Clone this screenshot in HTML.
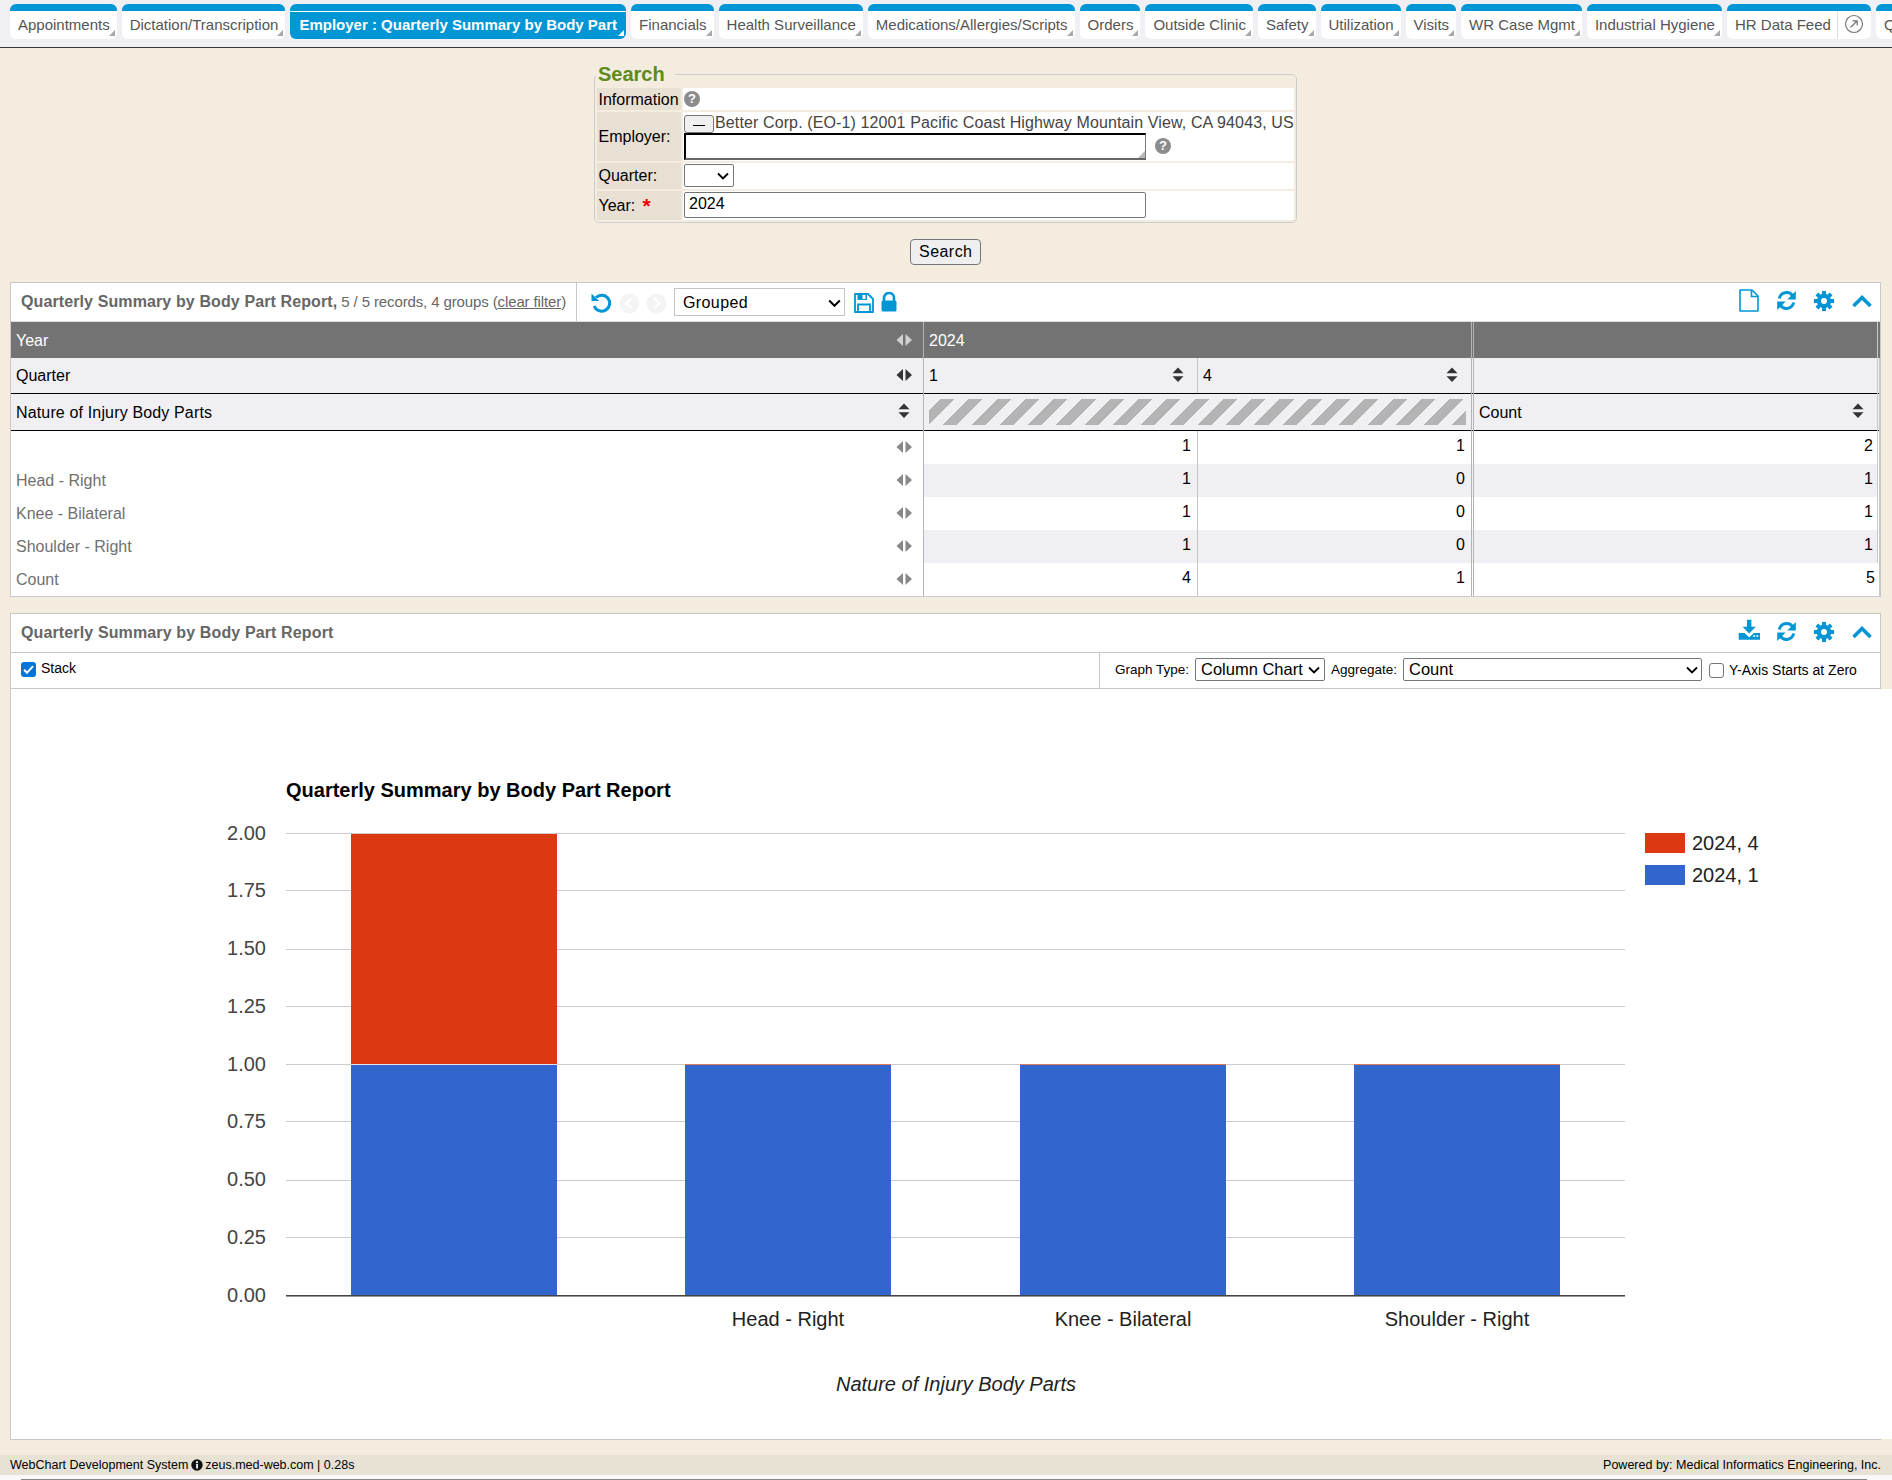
<!DOCTYPE html>
<html><head><meta charset="utf-8">
<style>
*{box-sizing:border-box;}
html,body{margin:0;padding:0;}
body{width:1892px;height:1480px;overflow:hidden;position:relative;background:#f4eddf;font-family:"Liberation Sans",sans-serif;color:#000;}
.a{position:absolute;white-space:nowrap;}
/* tab bar */
#tabbar{position:absolute;left:0;top:0;width:1892px;height:48px;background:#efeff4;border-bottom:1px solid #363636;}
.tab{position:absolute;white-space:nowrap;top:4px;height:35px;background:#fff;border-top:7px solid #0096d6;border-radius:6px;font-size:15px;color:#555;line-height:28px;padding:0 7px 0 8px;}
.tab .cn{position:absolute;right:2px;bottom:3px;width:0;height:0;border-style:solid;border-width:0 0 6px 6px;border-color:transparent transparent #a8a8a8 transparent;}
.tab.act{background:#0096d6;color:#fff;font-weight:bold;padding:0 9px;}
.tab.act:before{content:"";position:absolute;left:0;right:0;top:0;height:1px;background:#fff;}
.tab.act .cn{border-color:transparent transparent #fff transparent;}

/* search */
#fs{position:absolute;left:594px;top:74px;width:703px;height:149px;border:1px solid #cccccc;border-radius:5px;}
#legend{position:absolute;left:596px;top:62px;height:24px;padding:0 10px 0 2px;background:#f4eddf;font-size:20px;font-weight:bold;color:#5e8a1e;line-height:24px;}
.lc{position:absolute;left:597px;width:84px;background:#e8e1d3;}
.vc{position:absolute;left:683px;width:611px;background:#fff;}
.lbl{position:absolute;left:598.5px;font-size:16px;color:#000;line-height:18px;}
.help{position:absolute;width:16px;height:16px;border-radius:50%;background:#8c8c8c;color:#fff;font-weight:bold;font-size:13px;line-height:16px;text-align:center;}
.btn{position:absolute;background:#efefef;border:1px solid #767676;border-radius:3px;}

/* report panel */
.panel{position:absolute;left:10px;width:1871px;background:#fff;border:1px solid #c8c8c8;}
.ptitle{position:absolute;font-size:16px;font-weight:bold;color:#666;line-height:18px;}
.cell{position:absolute;font-size:16px;line-height:18px;}

/* chart panel */
.ico{position:absolute;}
</style></head><body>
<div id="tabbar">
<div class="tab" style="left:10px;width:106.7px">Appointments<i class="cn"></i></div>
<div class="tab" style="left:121.7px;width:163.7px">Dictation/Transcription<i class="cn"></i></div>
<div class="tab act" style="left:290.4px;width:335.7px">Employer : Quarterly Summary by Body Part<i class="cn"></i></div>
<div class="tab" style="left:631.1px;width:82.5px">Financials<i class="cn"></i></div>
<div class="tab" style="left:718.6px;width:144.2px">Health Surveillance<i class="cn"></i></div>
<div class="tab" style="left:867.8px;width:206.8px">Medications/Allergies/Scripts<i class="cn"></i></div>
<div class="tab" style="left:1079.6px;width:60.9px">Orders<i class="cn"></i></div>
<div class="tab" style="left:1145.4px;width:107.5px">Outside Clinic<i class="cn"></i></div>
<div class="tab" style="left:1258px;width:57.5px">Safety<i class="cn"></i></div>
<div class="tab" style="left:1320.5px;width:80px">Utilization<i class="cn"></i></div>
<div class="tab" style="left:1405.5px;width:50.6px">Visits<i class="cn"></i></div>
<div class="tab" style="left:1461.1px;width:120.9px">WR Case Mgmt<i class="cn"></i></div>
<div class="tab" style="left:1586.9px;width:135.1px">Industrial Hygiene<i class="cn"></i></div>
<div class="tab" style="left:1727px;width:144px">HR Data Feed
  <span style="position:absolute;left:110px;top:0;width:1px;height:28px;background:#ddd"></span>
  <svg style="position:absolute;left:117px;top:3px" width="20" height="20" viewBox="0 0 20 20"><circle cx="10" cy="10" r="8.5" fill="none" stroke="#777" stroke-width="1.2"/><path d="M6.5 13.5 L13 7 M8.5 6.8 H13.2 V11.5" fill="none" stroke="#777" stroke-width="1.2"/></svg>
</div>
<div class="tab" style="left:1876px;width:120px">Quality</div>
</div>

<div id="fs"></div>
<div id="legend">Search</div>
<div class="lc" style="top:88px;height:22px"></div><div class="vc" style="top:88px;height:22px"></div>
<div class="lc" style="top:112px;height:49px"></div><div class="vc" style="top:112px;height:49px"></div>
<div class="lc" style="top:163px;height:26px"></div><div class="vc" style="top:163px;height:26px"></div>
<div class="lc" style="top:191px;height:29px"></div><div class="vc" style="top:191px;height:29px"></div>
<div class="lbl a" style="top:91px">Information</div>
<div class="help" style="left:684px;top:91px">?</div>
<div class="lbl a" style="top:128px">Employer:</div>
<div class="btn" style="left:684px;top:115px;width:30px;height:18px"><span style="position:absolute;left:8px;top:9px;width:12px;height:1px;background:#000"></span></div>
<div class="a" style="left:715px;top:114px;font-size:16px;color:#444;line-height:18px;letter-spacing:0.12px">Better Corp. (EO-1) 12001 Pacific Coast Highway Mountain View, CA 94043, US</div>
<div class="a" style="left:684px;top:133px;width:462px;height:27px;background:#fff;border-style:solid;border-width:2px 1px 2px 2px;border-color:#000 #777 #666 #000;"><svg style="position:absolute;right:0;bottom:0" width="7" height="7" viewBox="0 0 7 7"><path d="M7 0 V7 H0 Z" fill="#b8b8b8"/></svg></div>
<div class="help" style="left:1155px;top:138px">?</div>
<div class="lbl a" style="top:166.5px">Quarter:</div>
<div class="a" style="left:684px;top:164px;width:50px;height:23px;background:#fff;border:1px solid #767676;border-radius:2px"><svg style="position:absolute;left:32px;top:7px" width="12" height="8" viewBox="0 0 12 8"><path d="M1 1.5 L6 6.5 L11 1.5" fill="none" stroke="#000" stroke-width="1.8"/></svg></div>
<div class="lbl a" style="top:197px">Year:</div>
<div class="a" style="left:642.5px;top:196px;font-size:21px;color:#e00;font-weight:bold;line-height:20px">*</div>
<div class="a" style="left:684px;top:192px;width:462px;height:26px;background:#fff;border:1px solid #767676;border-radius:2px;font-size:16px;line-height:22px;padding-left:4px">2024</div>
<div class="btn" style="left:910px;top:239px;width:71px;height:26px;font-size:16px;line-height:24px;text-align:center;border-radius:4px;letter-spacing:0.45px;text-indent:0.5px">Search</div>

<div class="panel" style="top:282px;height:315px"></div>
<div class="ptitle a" style="left:21px;top:293px;letter-spacing:0.11px">Quarterly Summary by Body Part Report,<span style="font-weight:normal;font-size:15px;letter-spacing:-0.12px"> 5 / 5 records, 4 groups (<u>clear filter</u>)</span></div>
<div class="a" style="left:576px;top:283px;width:1px;height:38px;background:#c8c8c8"></div>
<!-- toolbar icons -->
<svg class="a" style="left:590px;top:292px" width="23" height="22" viewBox="0 0 23 22"><path d="M6 5.5 A8 8 0 1 1 4.2 14" fill="none" stroke="#0096d6" stroke-width="3"/><path d="M1.5 1.5 V9 H9 Z" fill="#0096d6"/></svg>
<svg class="a" style="left:619px;top:293px" width="21" height="21" viewBox="0 0 21 21"><circle cx="10.5" cy="10.5" r="10" fill="#f4f4f4"/><path d="M12.5 5.5 L7.5 10.5 L12.5 15.5" fill="none" stroke="#fff" stroke-width="2.2"/></svg>
<svg class="a" style="left:646px;top:293px" width="21" height="21" viewBox="0 0 21 21"><circle cx="10.5" cy="10.5" r="10" fill="#f4f4f4"/><path d="M8.5 5.5 L13.5 10.5 L8.5 15.5" fill="none" stroke="#fff" stroke-width="2.2"/></svg>
<div class="a" style="left:674px;top:288px;width:171px;height:28px;border:1px solid #c4c4c4;background:#fff;font-size:16px;line-height:28px;padding-left:8px;letter-spacing:0.4px">Grouped<svg style="position:absolute;left:153px;top:10px" width="13" height="9" viewBox="0 0 13 9"><path d="M1.2 1.5 L6.5 6.8 L11.8 1.5" fill="none" stroke="#000" stroke-width="2"/></svg></div>
<svg class="a" style="left:853px;top:292px" width="22" height="22" viewBox="0 0 22 22"><path d="M2 2 H15 L20 7 V20 H2 Z" fill="none" stroke="#0096d6" stroke-width="1.8" stroke-linejoin="round"/><path d="M4.5 2 H14 V8 H4.5 Z" fill="#0096d6"/><rect x="9.5" y="3" width="3" height="4" fill="#fff"/><path d="M5 20 V12.5 H17 V20" fill="none" stroke="#0096d6" stroke-width="1.8"/></svg>
<svg class="a" style="left:880px;top:292px" width="18" height="21" viewBox="0 0 18 21"><path d="M4 9 V6 A5 5 0 0 1 14 6 V9" fill="none" stroke="#0096d6" stroke-width="2.6"/><rect x="1.5" y="8.5" width="15" height="11" rx="1.5" fill="#0096d6"/></svg>
<!-- right header icons -->
<svg class="a" style="left:1738px;top:288px" width="22" height="25" viewBox="0 0 22 25"><path d="M2 2 H14 L20 8 V23 H2 Z" fill="none" stroke="#0096d6" stroke-width="1.6" stroke-linejoin="round"/><path d="M13.5 2 V8.5 H20" fill="none" stroke="#0096d6" stroke-width="1.6"/></svg>
<svg class="a ref" style="left:1776px;top:290px" width="21" height="21" viewBox="0 0 21 21"><path d="M3.3 8.5 A7.5 7.5 0 0 1 16.5 5.5" fill="none" stroke="#0096d6" stroke-width="3"/><path d="M19.8 1 V9.5 H11.3 Z" fill="#0096d6"/><path d="M17.7 12.5 A7.5 7.5 0 0 1 4.5 15.5" fill="none" stroke="#0096d6" stroke-width="3"/><path d="M1.2 20 V11.5 H9.7 Z" fill="#0096d6"/></svg>
<svg class="a gear" style="left:1814px;top:291px" width="20" height="20" viewBox="0 0 20 20"><g fill="#0096d6"><rect x="8" y="0" width="4" height="20"/><rect x="0" y="8" width="20" height="4"/><rect x="8" y="0" width="4" height="20" transform="rotate(45 10 10)"/><rect x="8" y="0" width="4" height="20" transform="rotate(-45 10 10)"/><circle cx="10" cy="10" r="7.2"/></g><circle cx="10" cy="10" r="3" fill="#fff"/></svg>
<svg class="a chev" style="left:1851px;top:293px" width="22" height="16" viewBox="0 0 22 16"><path d="M2.5 13 L11 4.5 L19.5 13" fill="none" stroke="#0096d6" stroke-width="3.6"/></svg>
<!-- table -->
<div class="a" style="left:11px;top:321px;width:1869px;height:1px;background:#dcdcdc"></div>
<div class="a" style="left:11px;top:322px;width:1869px;height:36px;background:#737373"></div>
<div class="a" style="left:11px;top:358px;width:1869px;height:72px;background:#f0eff4"></div>
<div class="a" style="left:11px;top:393px;width:1869px;height:1px;background:#000"></div>
<div class="a" style="left:11px;top:430px;width:1869px;height:1px;background:#000"></div>
<div class="a" style="left:924px;top:464px;width:953px;height:33px;background:#f0eff4"></div>
<div class="a" style="left:924px;top:530px;width:953px;height:33px;background:#f0eff4"></div>
<div class="a" style="left:923px;top:322px;width:1px;height:274px;background:#b4b4b4"></div>
<div class="a" style="left:1197px;top:358px;width:1px;height:35px;background:#c4c4c4"></div><div class="a" style="left:1197px;top:431px;width:1px;height:165px;background:#c4c4c4"></div>
<div class="a" style="left:1471px;top:322px;width:1px;height:274px;background:#b4b4b4"></div>
<div class="a" style="left:1473px;top:322px;width:1px;height:274px;background:#b4b4b4"></div>
<div class="a" style="left:1877px;top:322px;width:1px;height:241px;background:#c8c8c8"></div><div class="a" style="left:1879px;top:358px;width:1px;height:238px;background:#c8c8c8"></div>
<div class="a" style="left:929px;top:399px;width:537px;height:26px;background:repeating-linear-gradient(-45deg,#b4b4b4 0,#b4b4b4 10px,transparent 10px,transparent 20px)"></div>
<div class="cell a" style="left:16px;top:332px;color:#fff">Year</div>
<div class="cell a" style="left:929px;top:332px;color:#fff">2024</div>
<div class="cell a" style="left:16px;top:367px">Quarter</div>
<div class="cell a" style="left:929px;top:367px">1</div>
<div class="cell a" style="left:1203px;top:367px">4</div>
<div class="cell a" style="left:16px;top:404px;letter-spacing:0.15px">Nature of Injury Body Parts</div>
<div class="cell a" style="left:1479px;top:404px">Count</div>
<svg class="a" style="left:896px;top:334px" width="17" height="12" viewBox="0 0 17 12"><path d="M7 0 V12 L0.5 6 Z M9.5 0 V12 L16 6 Z" fill="#d0d0d0"/></svg>
<svg class="a" style="left:896px;top:369px" width="17" height="12" viewBox="0 0 17 12"><path d="M7 0 V12 L0.5 6 Z M9.5 0 V12 L16 6 Z" fill="#333"/></svg>
<svg class="a" style="left:898px;top:403px" width="12" height="16" viewBox="0 0 12 16"><path d="M0.5 6.3 L6 0.5 L11.5 6.3 Z M0.5 9.2 L6 15 L11.5 9.2 Z" fill="#333"/></svg>
<svg class="a" style="left:1172px;top:367px" width="12" height="16" viewBox="0 0 12 16"><path d="M0.5 6.3 L6 0.5 L11.5 6.3 Z M0.5 9.2 L6 15 L11.5 9.2 Z" fill="#333"/></svg>
<svg class="a" style="left:1446px;top:367px" width="12" height="16" viewBox="0 0 12 16"><path d="M0.5 6.3 L6 0.5 L11.5 6.3 Z M0.5 9.2 L6 15 L11.5 9.2 Z" fill="#333"/></svg>
<svg class="a" style="left:1852px;top:403px" width="12" height="16" viewBox="0 0 12 16"><path d="M0.5 6.3 L6 0.5 L11.5 6.3 Z M0.5 9.2 L6 15 L11.5 9.2 Z" fill="#333"/></svg>
<svg class="a" style="left:896px;top:441px" width="17" height="12" viewBox="0 0 17 12"><path d="M7 0 V12 L0.5 6 Z M9.5 0 V12 L16 6 Z" fill="#888"/></svg>
<div class="cell a" style="left:16px;top:439px;color:#707070"></div>
<div class="cell a" style="right:701px;top:437px">1</div>
<div class="cell a" style="right:427px;top:437px">1</div>
<div class="cell a" style="right:19px;top:437px">2</div>
<svg class="a" style="left:896px;top:474px" width="17" height="12" viewBox="0 0 17 12"><path d="M7 0 V12 L0.5 6 Z M9.5 0 V12 L16 6 Z" fill="#888"/></svg>
<div class="cell a" style="left:16px;top:472px;color:#707070">Head - Right</div>
<div class="cell a" style="right:701px;top:470px">1</div>
<div class="cell a" style="right:427px;top:470px">0</div>
<div class="cell a" style="right:19px;top:470px">1</div>
<svg class="a" style="left:896px;top:507px" width="17" height="12" viewBox="0 0 17 12"><path d="M7 0 V12 L0.5 6 Z M9.5 0 V12 L16 6 Z" fill="#888"/></svg>
<div class="cell a" style="left:16px;top:505px;color:#707070">Knee - Bilateral</div>
<div class="cell a" style="right:701px;top:503px">1</div>
<div class="cell a" style="right:427px;top:503px">0</div>
<div class="cell a" style="right:19px;top:503px">1</div>
<svg class="a" style="left:896px;top:540px" width="17" height="12" viewBox="0 0 17 12"><path d="M7 0 V12 L0.5 6 Z M9.5 0 V12 L16 6 Z" fill="#888"/></svg>
<div class="cell a" style="left:16px;top:538px;color:#707070">Shoulder - Right</div>
<div class="cell a" style="right:701px;top:536px">1</div>
<div class="cell a" style="right:427px;top:536px">0</div>
<div class="cell a" style="right:19px;top:536px">1</div>
<svg class="a" style="left:896px;top:573px" width="17" height="12" viewBox="0 0 17 12"><path d="M7 0 V12 L0.5 6 Z M9.5 0 V12 L16 6 Z" fill="#888"/></svg>
<div class="cell a" style="left:16px;top:571px;color:#707070">Count</div>
<div class="cell a" style="right:701px;top:569px">4</div>
<div class="cell a" style="right:427px;top:569px">1</div>
<div class="cell a" style="right:17px;top:569px">5</div>

<div class="panel" style="top:613px;height:827px"></div>
<div class="ptitle a" style="left:21px;top:624px;letter-spacing:0.13px">Quarterly Summary by Body Part Report</div>
<svg class="a" style="left:1737px;top:619px" width="24" height="22" viewBox="0 0 24 22"><path d="M10 0.8 H14.4 V7.7 H18.8 L12.2 14.6 L5.6 7.7 H10 Z" fill="#0096d6"/><path d="M1.7 14 H7.6 L12.2 18.4 L16.8 14 H23 V20.8 H1.7 Z" fill="#0096d6"/><rect x="16.2" y="16.3" width="2" height="1.5" fill="#fff"/><rect x="19.4" y="16.3" width="2" height="1.5" fill="#fff"/></svg>
<svg class="a" style="left:1776px;top:621px" width="21" height="21" viewBox="0 0 21 21"><path d="M3.3 8.5 A7.5 7.5 0 0 1 16.5 5.5" fill="none" stroke="#0096d6" stroke-width="3"/><path d="M19.8 1 V9.5 H11.3 Z" fill="#0096d6"/><path d="M17.7 12.5 A7.5 7.5 0 0 1 4.5 15.5" fill="none" stroke="#0096d6" stroke-width="3"/><path d="M1.2 20 V11.5 H9.7 Z" fill="#0096d6"/></svg>
<svg class="a" style="left:1814px;top:622px" width="20" height="20" viewBox="0 0 20 20"><g fill="#0096d6"><rect x="8" y="0" width="4" height="20"/><rect x="0" y="8" width="20" height="4"/><rect x="8" y="0" width="4" height="20" transform="rotate(45 10 10)"/><rect x="8" y="0" width="4" height="20" transform="rotate(-45 10 10)"/><circle cx="10" cy="10" r="7.2"/></g><circle cx="10" cy="10" r="3" fill="#fff"/></svg>
<svg class="a" style="left:1851px;top:624px" width="22" height="16" viewBox="0 0 22 16"><path d="M2.5 13 L11 4.5 L19.5 13" fill="none" stroke="#0096d6" stroke-width="3.6"/></svg>
<div class="a" style="left:11px;top:652px;width:1869px;height:1px;background:#c8c8c8"></div>
<div class="a" style="left:11px;top:688px;width:1869px;height:1px;background:#c8c8c8"></div>
<div class="a" style="left:1099px;top:653px;width:1px;height:35px;background:#c8c8c8"></div>
<div class="a" style="left:21px;top:662px;width:15px;height:15px;border-radius:3px;background:#0075d9"><svg style="position:absolute;left:0;top:0" width="15" height="15" viewBox="0 0 15 15"><path d="M3 7.8 L6 10.8 L12 4.2" fill="none" stroke="#fff" stroke-width="2"/></svg></div>
<div class="a" style="left:41px;top:660px;font-size:14px;line-height:16px">Stack</div>
<div class="a" style="left:1115px;top:662px;font-size:13.5px;line-height:16px">Graph Type:</div>
<div class="a" style="left:1195px;top:658px;width:130px;height:23px;border:1px solid #767676;border-radius:2px;background:#fff;font-size:16.5px;line-height:21px;padding-left:5px">Column Chart<svg style="position:absolute;left:112px;top:7px" width="12" height="8" viewBox="0 0 12 8"><path d="M1 1.5 L6 6.5 L11 1.5" fill="none" stroke="#000" stroke-width="1.8"/></svg></div>
<div class="a" style="left:1331px;top:662px;font-size:13.5px;line-height:16px">Aggregate:</div>
<div class="a" style="left:1403px;top:658px;width:299px;height:23px;border:1px solid #767676;border-radius:2px;background:#fff;font-size:16.5px;line-height:21px;padding-left:5px">Count<svg style="position:absolute;left:282px;top:7px" width="12" height="8" viewBox="0 0 12 8"><path d="M1 1.5 L6 6.5 L11 1.5" fill="none" stroke="#000" stroke-width="1.8"/></svg></div>
<div class="a" style="left:1709px;top:663px;width:15px;height:15px;border:1px solid #767676;border-radius:3px;background:#fff"></div>
<div class="a" style="left:1729px;top:662px;font-size:14px;line-height:16px">Y-Axis Starts at Zero</div>
<div class="a" style="left:11px;top:689px;width:1881px;height:750px;background:#fff"></div>
<div class="a" style="left:10px;top:1439px;width:1871px;height:1px;background:#c8c8c8"></div>
<svg class="a" style="left:0;top:689px" width="1892" height="750" viewBox="0 689 1892 750" font-family="Liberation Sans, sans-serif">
<text x="286" y="796.5" font-size="20" font-weight="bold" fill="#000">Quarterly Summary by Body Part Report</text>
<rect x="286" y="833" width="1339" height="1" fill="#cccccc"/>
<text x="266" y="839.5" font-size="20" fill="#444" text-anchor="end">2.00</text>
<rect x="286" y="890" width="1339" height="1" fill="#cccccc"/>
<text x="266" y="897.2" font-size="20" fill="#444" text-anchor="end">1.75</text>
<rect x="286" y="949" width="1339" height="1" fill="#cccccc"/>
<text x="266" y="955.0" font-size="20" fill="#444" text-anchor="end">1.50</text>
<rect x="286" y="1006" width="1339" height="1" fill="#cccccc"/>
<text x="266" y="1012.8" font-size="20" fill="#444" text-anchor="end">1.25</text>
<rect x="286" y="1064" width="1339" height="1" fill="#cccccc"/>
<text x="266" y="1070.5" font-size="20" fill="#444" text-anchor="end">1.00</text>
<rect x="286" y="1121" width="1339" height="1" fill="#cccccc"/>
<text x="266" y="1128.2" font-size="20" fill="#444" text-anchor="end">0.75</text>
<rect x="286" y="1180" width="1339" height="1" fill="#cccccc"/>
<text x="266" y="1186.0" font-size="20" fill="#444" text-anchor="end">0.50</text>
<rect x="286" y="1237" width="1339" height="1" fill="#cccccc"/>
<text x="266" y="1243.8" font-size="20" fill="#444" text-anchor="end">0.25</text>
<text x="266" y="1301.5" font-size="20" fill="#444" text-anchor="end">0.00</text>
<rect x="351" y="1065" width="206" height="230" fill="#3366cc"/>
<rect x="351" y="834" width="206" height="230" fill="#dc3912"/>
<rect x="351" y="1064" width="206" height="1" fill="#dfe4f0"/>
<rect x="685" y="1065" width="206" height="230" fill="#3366cc"/>
<rect x="685" y="1064" width="206" height="1" fill="#e07a5a"/>
<rect x="1020" y="1065" width="206" height="230" fill="#3366cc"/>
<rect x="1020" y="1064" width="206" height="1" fill="#e07a5a"/>
<rect x="1354" y="1065" width="206" height="230" fill="#3366cc"/>
<rect x="1354" y="1064" width="206" height="1" fill="#e07a5a"/>
<rect x="286" y="1295" width="1339" height="1" fill="#444"/><rect x="286" y="1296" width="1339" height="1" fill="#999"/>
<text x="788" y="1326" font-size="20" fill="#222" text-anchor="middle">Head - Right</text>
<text x="1123" y="1326" font-size="20" fill="#222" text-anchor="middle">Knee - Bilateral</text>
<text x="1457" y="1326" font-size="20" fill="#222" text-anchor="middle">Shoulder - Right</text>
<text x="956" y="1390.5" font-size="20" font-style="italic" fill="#222" text-anchor="middle">Nature of Injury Body Parts</text>
<rect x="1645" y="833" width="40" height="20" fill="#dc3912"/><text x="1692" y="850" font-size="20" fill="#222">2024, 4</text>
<rect x="1645" y="865" width="40" height="20" fill="#3366cc"/><text x="1692" y="882" font-size="20" fill="#222">2024, 1</text>
</svg>
<div class="a" style="left:0;top:1455px;width:1892px;height:20px;background:#e8e2d4"></div>
<div class="a" style="left:10px;top:1458px;font-size:12.5px;line-height:15px">WebChart Development System <svg style="vertical-align:-2px;margin-left:-1px;margin-right:-1px" width="12" height="12" viewBox="0 0 13 13"><circle cx="6.5" cy="6.5" r="6.2" fill="#111"/><rect x="5.6" y="5.3" width="1.9" height="5" fill="#fff"/><circle cx="6.5" cy="3.4" r="1.1" fill="#fff"/></svg> zeus.med-web.com | 0.28s</div>
<div class="a" style="right:11px;top:1458px;font-size:12.5px;line-height:15px">Powered by: Medical Informatics Engineering, Inc.</div>
<div class="a" style="left:0;top:1475px;width:1892px;height:5px;background:#f9f9f9"></div>
<div class="a" style="left:21px;top:1479px;width:1846px;height:1px;background:#888"></div>
</body></html>
